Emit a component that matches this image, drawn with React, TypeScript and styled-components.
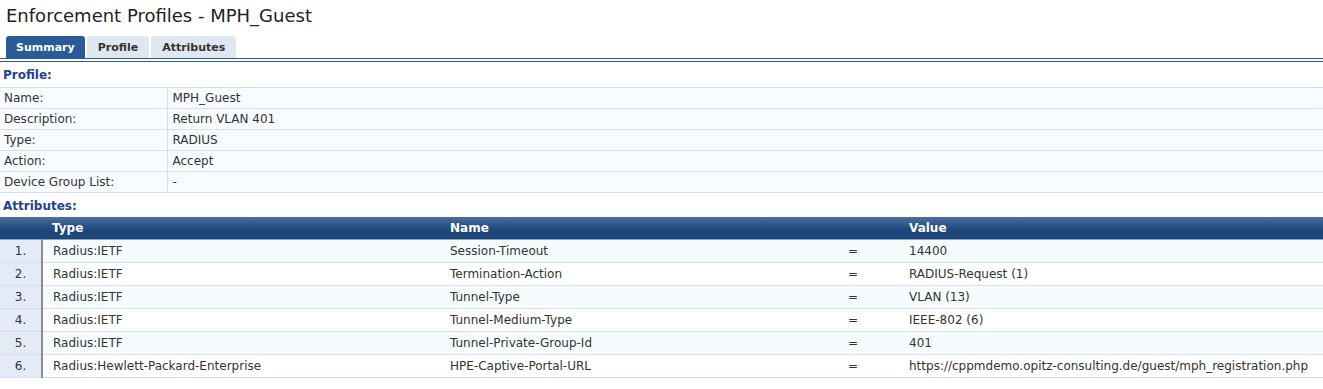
import React from "react";
import styled, { createGlobalStyle } from "styled-components";

const Global = createGlobalStyle`
  html, body { margin: 0; padding: 0; background: #ffffff; }
  body { font-family: "DejaVu Sans", Verdana, sans-serif; color: #222; }
`;

const Page = styled.div`
  width: 1323px;
  display: flex;
  flex-direction: column;
`;

const Title = styled.h1`
  margin: 0;
  padding: 5px 0 0 6px;
  height: 31px;
  box-sizing: border-box;
  font-size: 18px;
  font-weight: normal;
  line-height: 22px;
  color: #222;
`;

const TabBar = styled.div`
  display: flex;
  gap: 2px;
  padding-left: 6px;
  height: 22px;
  margin-top: 5px;
  border-bottom: 1px solid #2a5a97;
`;

const Tab = styled.div<{ $active?: boolean }>`
  display: flex;
  align-items: center;
  padding: 0 ${(p) => (p.$active ? "10px" : "11px")};
  border-radius: 3px 3px 0 0;
  font-size: 11px;
  font-weight: bold;
  background: ${(p) => (p.$active ? "#2a5a97" : "#dfe7f1")};
  color: ${(p) => (p.$active ? "#ffffff" : "#333")};
`;

const SecondLine = styled.div`
  margin-top: 2px;
  height: 1px;
  background: #2a5a97;
`;

const SectionLabel = styled.div<{ $h: number }>`
  height: ${(p) => p.$h}px;
  box-sizing: border-box;
  padding: 6px 0 0 3px;
  font-size: 12px;
  font-weight: bold;
  color: #23428f;
`;

const InfoTable = styled.table`
  width: 100%;
  border-collapse: collapse;
  font-size: 12px;
`;

const InfoRow = styled.tr`
  height: 21px;
  background: #f8fbff;
  border-top: 1px solid #d3def4;
  border-bottom: 1px solid #d3def4;
`;

const InfoLabel = styled.td`
  width: 167px;
  padding: 0 0 0 4px;
  box-sizing: border-box;
  border-right: 1px solid #d3def4;
  color: #333;
`;

const InfoValue = styled.td`
  padding: 0 0 0 5px;
  color: #333;
`;

const AttrTable = styled.table`
  width: 100%;
  border-collapse: collapse;
  font-size: 12px;
  table-layout: fixed;
`;

const HeadRow = styled.tr`
  height: 22px;
  background: linear-gradient(#4d6f9d 0%, #2f5688 35%, #1e467b 60%, #1e467b 100%);
`;

const Th = styled.th<{ $w?: number }>`
  ${(p) => (p.$w ? `width: ${p.$w}px;` : "")}
  box-sizing: border-box;
  padding: 0 0 0 10px;
  text-align: left;
  color: #ffffff;
  font-weight: bold;
  font-size: 12px;
  border-bottom: 1px solid #8ea3c2;
`;

const AttrRow = styled.tr<{ $alt: boolean }>`
  height: 23px;
  background: ${(p) => (p.$alt ? "#f6fcfe" : "#ffffff")};
  border-bottom: 1px solid #d3def4;
`;

const NumCell = styled.td`
  text-align: center;
  background: #e4eaf6;
  border-right: 2px solid #8c8c8c;
  color: #333;
`;

const Td = styled.td`
  padding: 0 0 0 10px;
  color: #333;
  white-space: nowrap;
`;

const info: [string, string][] = [
  ["Name:", "MPH_Guest"],
  ["Description:", "Return VLAN 401"],
  ["Type:", "RADIUS"],
  ["Action:", "Accept"],
  ["Device Group List:", "-"],
];

const attrs: [string, string, string][] = [
  ["Radius:IETF", "Session-Timeout", "14400"],
  ["Radius:IETF", "Termination-Action", "RADIUS-Request (1)"],
  ["Radius:IETF", "Tunnel-Type", "VLAN (13)"],
  ["Radius:IETF", "Tunnel-Medium-Type", "IEEE-802 (6)"],
  ["Radius:IETF", "Tunnel-Private-Group-Id", "401"],
  [
    "Radius:Hewlett-Packard-Enterprise",
    "HPE-Captive-Portal-URL",
    "https://cppmdemo.opitz-consulting.de/guest/mph_registration.php",
  ],
];

export default function App() {
  return (
    <Page>
      <Global />
      <Title>Enforcement Profiles - MPH_Guest</Title>
      <TabBar>
        <Tab $active>Summary</Tab>
        <Tab>Profile</Tab>
        <Tab>Attributes</Tab>
      </TabBar>
      <SecondLine />
      <SectionLabel $h={25}>Profile:</SectionLabel>
      <InfoTable>
        <tbody>
          {info.map(([k, v]) => (
            <InfoRow key={k}>
              <InfoLabel>{k}</InfoLabel>
              <InfoValue>{v}</InfoValue>
            </InfoRow>
          ))}
        </tbody>
      </InfoTable>
      <SectionLabel $h={24}>Attributes:</SectionLabel>
      <AttrTable>
        <thead>
          <HeadRow>
            <Th $w={42} />
            <Th $w={398}>Type</Th>
            <Th $w={398}>Name</Th>
            <Th $w={61} />
            <Th>Value</Th>
          </HeadRow>
        </thead>
        <tbody>
          {attrs.map(([t, n, v], i) => (
            <AttrRow key={i} $alt={i % 2 === 0}>
              <NumCell>{i + 1}.</NumCell>
              <Td>{t}</Td>
              <Td>{n}</Td>
              <Td>=</Td>
              <Td>{v}</Td>
            </AttrRow>
          ))}
        </tbody>
      </AttrTable>
    </Page>
  );
}
